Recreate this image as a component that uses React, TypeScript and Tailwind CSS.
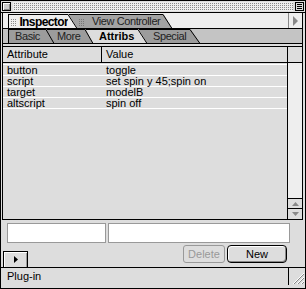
import React from "react";

const rows = [
  ["button", "toggle"],
  ["script", "set spin y 45;spin on"],
  ["target", "modelB"],
  ["altscript", "spin off"],
];

// dotted grip patterns (one dot in every 2x2 cell)
const dotsLight =
  "bg-[linear-gradient(90deg,#eeeeee_50%,transparent_50%),linear-gradient(#eeeeee_50%,#8a8a8a_50%)] bg-[length:2px_2px]";
const dotsDark =
  "bg-[linear-gradient(90deg,#a3a3a3_50%,transparent_50%),linear-gradient(#a3a3a3_50%,#777777_50%)] bg-[length:2px_2px]";

type TabProps = {
  label: string;
  fill: string;
  body: string;
  text: string;
  z: string;
  h: number;
  slant: number;
  overlap?: string;
  grip?: string;
};

function Tab({ label, fill, body, text, z, h, slant, overlap = "", grip }: TabProps) {
  return (
    <div className={`relative flex ${z} ${overlap}`}>
      <div className={`flex items-center border-l border-t border-black ${body}`} style={{ background: fill }}>
        {grip && <div className={`h-[8px] w-[7px] ${grip}`} />}
        <span className={text}>{label}</span>
      </div>
      <svg width={slant} height={h} className="block">
        <polygon points={`0,0 0.5,0 ${slant},${h} 0,${h}`} fill={fill} />
        <line x1="0" y1="0.5" x2={slant} y2={h + 0.5} stroke="#000" strokeWidth="1" />
      </svg>
    </div>
  );
}

export default function App() {
  return (
    <div className="flex h-[289px] w-[306px] flex-col border border-black bg-[#dddddd] font-['Liberation_Sans',Arial,sans-serif] text-[11px] leading-none text-black">
      {/* Title bar */}
      <div className="flex h-[12px] items-start border-b border-black pt-[1px]">
        <div className="ml-[1px] h-[9px] w-[9px] border border-black bg-[#cccccc] shadow-[inset_1px_1px_0_#fff,inset_-1px_-1px_0_#888]" />
        <div className={`ml-[2px] mr-[2px] h-[9px] flex-1 ${dotsLight}`} />
        <div className="mr-[1px] flex h-[9px] w-[9px] flex-col justify-center gap-[1px] border border-black bg-[#dddddd] px-[1px]">
          <div className="h-px bg-black" />
          <div className="h-px bg-black" />
          <div className="h-px bg-black" />
        </div>
      </div>

      {/* Framed content */}
      <div className="ml-[1px] mr-[2px] flex flex-col border-x border-b border-black">
        {/* Top tab row */}
        <div className="flex h-[16px] items-end border-b border-black bg-[#eeeeee] pl-[5px]">
          <Tab
            label="Inspector"
            fill="#eeeeee"
            body="h-[14px] w-[60px] pl-[1px]"
            text="ml-[3px] text-[12px] font-bold tracking-[-0.6px]"
            z="z-20"
            h={14}
            slant={9}
            grip={dotsLight}
          />
          <Tab
            label="View Controller"
            fill="#a3a3a3"
            body="h-[14px] w-[95px] pl-[9px]"
            text="ml-[7px] tracking-[-0.4px] text-[#222]"
            z="z-10"
            h={14}
            slant={9}
            overlap="-ml-[9px]"
            grip={dotsDark}
          />
          <div className="ml-auto flex h-full w-[14px] items-center justify-center border-l border-[#888]">
            <svg width="5" height="10" viewBox="0 0 5 10">
              <polygon points="0,0 5,5 0,10" fill="#888" />
            </svg>
          </div>
        </div>

        {/* Second tab row */}
        <div className="flex h-[15px] items-end border-b border-black bg-[#c4c4c4] pl-[5px]">
          <Tab label="Basic" fill="#9c9c9c" body="h-[14px] w-[38px] pl-[6px]" text="tracking-[-0.4px] text-[#222]" z="z-40" h={14} slant={8} />
          <Tab label="More" fill="#9c9c9c" body="h-[14px] w-[39px] pl-[10px]" text="tracking-[-0.4px] text-[#222]" z="z-30" h={14} slant={8} overlap="-ml-[8px]" />
          <Tab label="Attribs" fill="#dddddd" body="h-[14px] w-[53px] pl-[13px]" text="font-bold" z="z-20" h={14} slant={9} overlap="-ml-[8px]" />
          <Tab label="Special" fill="#9c9c9c" body="h-[14px] w-[52px] pl-[14px]" text="tracking-[-0.4px] text-[#222]" z="z-10" h={14} slant={10} overlap="-ml-[9px]" />
        </div>

        <div className="h-[2px]" />

        {/* Table header */}
        <div className="flex h-[17px] border-y border-black">
          <div className="flex w-[99px] items-center border-r border-black pl-[4px]">Attribute</div>
          <div className="flex w-[186px] items-center border-r border-black pl-[4px]">Value</div>
          <div className="flex-1" />
        </div>

        {/* Table body */}
        <div className="flex h-[156px]">
          <div className="w-[284px] pt-[1px]">
            {rows.map(([a, v]) => (
              <div key={a} className="flex h-[11px] items-center border-t border-white">
                <span className="w-[99px] pl-[4px]">{a}</span>
                <span className="pl-[4px]">{v}</span>
              </div>
            ))}
            <div className="border-t border-white" />
          </div>
          <div className="flex flex-1 flex-col border-l border-black">
            <div className="flex-1 bg-[#eeeeee]" />
            <div className="flex h-[10px] items-center justify-center border-t border-black">
              <svg width="7" height="4" viewBox="0 0 7 4">
                <polygon points="3.5,0 7,4 0,4" fill="#888" />
              </svg>
            </div>
            <div className="flex h-[11px] items-center justify-center border-t border-black">
              <svg width="7" height="4" viewBox="0 0 7 4">
                <polygon points="0,0 7,0 3.5,4" fill="#888" />
              </svg>
            </div>
          </div>
        </div>
      </div>

      {/* Edit area */}
      <div className="flex h-[47px] flex-col">
        <div className="mt-[3px] flex h-[20px]">
          <div className="ml-[6px] w-[99px] border border-[#999] bg-white" />
          <div className="ml-[2px] w-[182px] border border-[#999] bg-white" />
        </div>
        <div className="flex h-[24px] items-end">
          <button className="ml-[2px] flex h-[16px] w-[25px] items-center justify-center border border-b-0 border-black bg-[#dddddd] shadow-[inset_1px_1px_0_#fff,inset_-1px_0_0_#999]">
            <svg width="4" height="7" viewBox="0 0 4 7">
              <polygon points="0,0 4,3.5 0,7" fill="#000" />
            </svg>
          </button>
          <button className="mb-[4px] ml-[155px] flex h-[18px] w-[42px] items-center justify-center rounded-[3px] border border-[#999] text-[#999]">
            Delete
          </button>
          <button className="mb-[4px] ml-[2px] flex h-[18px] w-[60px] items-center justify-center rounded-[4px] border border-black bg-[#dddddd] shadow-[inset_1px_1px_0_#fff,inset_-1px_-1px_0_#888]">
            New
          </button>
        </div>
      </div>

      {/* Status bar */}
      <div className="flex h-[18px] border-t border-black">
        <div className="flex w-[288px] items-center border-r border-black pl-[6px]">Plug-in</div>
        <div className="flex flex-1 items-end justify-end pb-[1px] pr-[1px]">
          <svg width="13" height="13" viewBox="0 0 13 13">
            <line x1="2" y1="13" x2="13" y2="2" stroke="#fff" />
            <line x1="3" y1="13" x2="13" y2="3" stroke="#888" />
            <line x1="6" y1="13" x2="13" y2="6" stroke="#fff" />
            <line x1="7" y1="13" x2="13" y2="7" stroke="#888" />
            <line x1="10" y1="13" x2="13" y2="10" stroke="#fff" />
            <line x1="11" y1="13" x2="13" y2="11" stroke="#888" />
          </svg>
        </div>
      </div>
    </div>
  );
}
